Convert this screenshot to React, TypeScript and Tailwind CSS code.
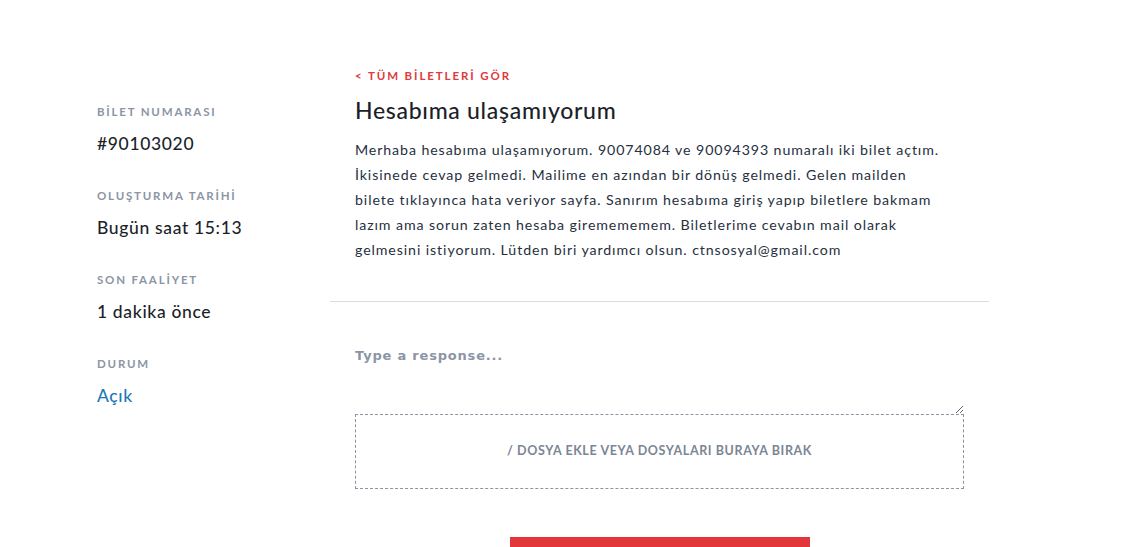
import { useState } from "react";

const meta = [
  { label: "BİLET NUMARASI", value: "#90103020" },
  { label: "OLUŞTURMA TARİHİ", value: "Bugün saat 15:13" },
  { label: "SON FAALİYET", value: "1 dakika önce" },
];

const App = () => {
  const [reply, setReply] = useState("");

  return (
    <div className="min-h-screen bg-white font-['Lato','Open_Sans',sans-serif] overflow-hidden">
      <div className="flex">
        {/* Ticket meta */}
        <aside className="w-[330px] shrink-0 pl-[97px] pt-[105px]">
          {meta.map((m) => (
            <div key={m.label} className="mb-[34px]">
              <div className="text-[11.5px] font-bold tracking-[1.8px] text-[#8b95a5] leading-[14px]">
                {m.label}
              </div>
              <div className="mt-[14px] text-[17.5px] font-medium text-[#1c1f2a] leading-[22px] tracking-[0.65px]">
                {m.value}
              </div>
            </div>
          ))}
          <div>
            <div className="text-[11.5px] font-bold tracking-[1.8px] text-[#8b95a5] leading-[14px]">
              DURUM
            </div>
            <div className="mt-[14px] text-[17.5px] font-medium text-[#1f78b4] leading-[22px] tracking-[0.65px]">
              Açık
            </div>
          </div>
        </aside>

        {/* Ticket body */}
        <main className="w-[659px] shrink-0">
          <div className="px-[25px] pt-[69px] pb-[39px]">
            <a href="#" className="block text-[11.5px] font-bold tracking-[1.9px] text-[#e0393e] leading-[14px]">
              &lt; TÜM BİLETLERİ GÖR
            </a>
            <h1 className="mt-[13px] text-[23px] font-medium text-[#1c1f2a] leading-[28px] tracking-[0.7px]">
              Hesabıma ulaşamıyorum
            </h1>
            <p className="mt-[13px] text-[14.2px] leading-[25px] tracking-[0.9px] text-[#263040] whitespace-nowrap">
              Merhaba hesabıma ulaşamıyorum. 90074084 ve 90094393 numaralı iki bilet açtım.
              <br />
              İkisinede cevap gelmedi. Mailime en azından bir dönüş gelmedi. Gelen mailden
              <br />
              bilete tıklayınca hata veriyor sayfa. Sanırım hesabıma giriş yapıp biletlere bakmam
              <br />
              lazım ama sorun zaten hesaba giremememem. Biletlerime cevabın mail olarak
              <br />
              gelmesini istiyorum. Lütden biri yardımcı olsun. ctnsosyal@gmail.com
            </p>
          </div>

          <div className="h-px bg-[#d9dbe0]" />

          <div className="px-[25px] pt-[30px]">
            <textarea
              value={reply}
              onChange={(e) => setReply(e.target.value)}
              placeholder="Type a response..."
              className="block w-full h-[82px] resize-y border-0 outline-none py-[14px] font-['DejaVu_Sans',sans-serif] text-[13px] font-bold tracking-[0.8px] text-[#2a3445] placeholder:text-[#8b95a5]"
            />
            <div className="h-[75px] border border-dashed border-[#8b95a5] flex items-center justify-center">
              <span className="text-[12.5px] font-bold tracking-[0.6px] text-[#7b8594]">
                / DOSYA EKLE VEYA DOSYALARI BURAYA BIRAK
              </span>
            </div>
            <div className="flex justify-center mt-[48px]">
              <button className="w-[300px] h-[56px] pt-[8px] bg-[#e3363b] text-white text-[13px] font-bold tracking-[1.5px]">
                GÖNDER
              </button>
            </div>
          </div>
        </main>
      </div>
    </div>
  );
};

export default App;
